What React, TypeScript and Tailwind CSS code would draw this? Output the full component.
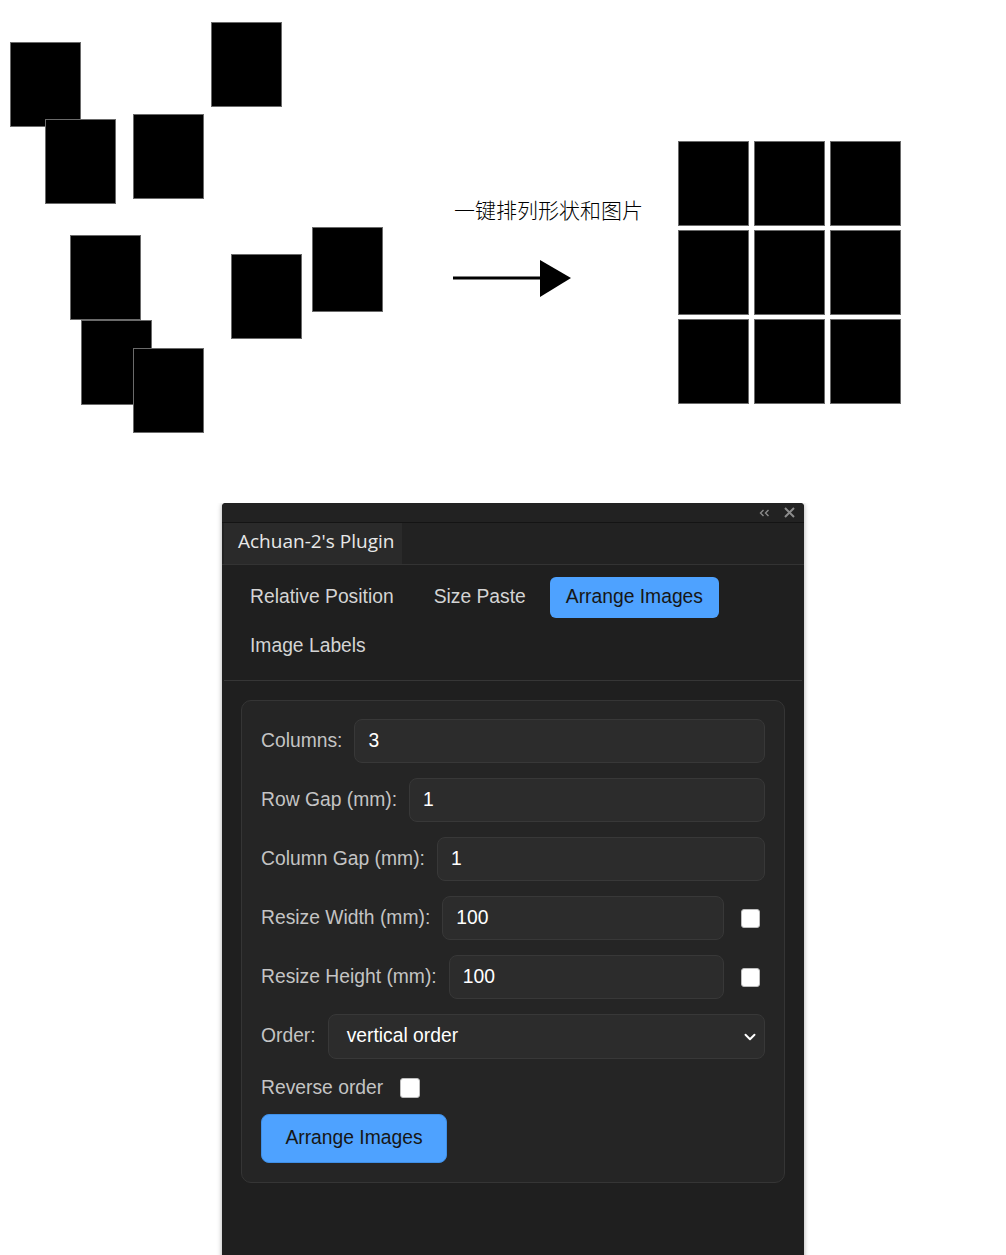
import { ChevronDown } from "lucide-react";

const scattered = [
  { left: 10, top: 42 },
  { left: 45, top: 119 },
  { left: 133, top: 114 },
  { left: 211, top: 22 },
  { left: 70, top: 235 },
  { left: 81, top: 320 },
  { left: 133, top: 348 },
  { left: 231, top: 254 },
  { left: 312, top: 227 },
];

const tabs = ["Relative Position", "Size Paste", "Arrange Images", "Image Labels"];

function Diagram() {
  return (
    <div className="relative h-[503px] w-full bg-white">
      {/* loose shapes, placed freely */}
      {scattered.map((s, i) => (
        <div
          key={i}
          className="absolute h-[85px] w-[71px] border border-[#6a6a6a] bg-black"
          style={{ left: s.left, top: s.top }}
        />
      ))}

      {/* caption + arrow */}
      <div className="absolute left-[454px] top-[194px] text-[21px] leading-[30px] text-black [font-family:'Noto_Sans_CJK_SC','Noto_Sans',sans-serif] font-light">
        一键排列形状和图片
      </div>
      <svg className="absolute left-[453px] top-[258px]" width="120" height="40" viewBox="0 0 120 40">
        <line x1="0" y1="20" x2="90" y2="20" stroke="#000" strokeWidth="3" />
        <polygon points="87,2 118,20 87,39" fill="#000" />
      </svg>

      {/* arranged result */}
      <div className="absolute left-[678px] top-[141px] grid grid-cols-[71px_71px_71px] gap-x-[5px] gap-y-[4px]">
        {Array.from({ length: 9 }).map((_, i) => (
          <div key={i} className="h-[85px] w-[71px] border border-[#6a6a6a] bg-black" />
        ))}
      </div>
    </div>
  );
}

function Field({
  label,
  value,
  check,
}: {
  label: string;
  value: string;
  check?: boolean;
}) {
  return (
    <div className="flex items-center">
      <span className="whitespace-nowrap text-[#c4c4c4]">{label}</span>
      <div className="ml-[12px] flex h-[44px] flex-1 items-center rounded-[8px] border border-[#383838] bg-[#2c2c2c] pl-[13px] text-white">
        {value}
      </div>
      {check && (
        <div className="ml-[17px] mr-[5px] h-[19px] w-[19px] rounded-[3px] border border-[#bdbdbd] bg-white" />
      )}
    </div>
  );
}

function Panel() {
  return (
    <div className="ml-[222px] w-[582px] overflow-hidden rounded-t-[4px] bg-[#1f1f1f] pb-[80px] shadow-[0_0_5px_rgba(0,0,0,0.35)]">
      {/* title bar */}
      <div className="flex h-[20px] items-center justify-end gap-[14px] border-b border-[#141414] bg-[#222222] pr-[9px]">
        <svg width="11" height="8" viewBox="0 0 11 8" fill="none" stroke="#8a8a8a" strokeWidth="1.4">
          <path d="M4.5 1 L1.5 4 L4.5 7" />
          <path d="M9.5 1 L6.5 4 L9.5 7" />
        </svg>
        <svg width="11" height="11" viewBox="0 0 11 11" fill="none" stroke="#8c8c8c" strokeWidth="2">
          <path d="M1 1 L10 10 M10 1 L1 10" />
        </svg>
      </div>

      {/* plugin tab header */}
      <div className="flex h-[42px] border-b border-[#333333] bg-[#222222] pl-[2px]">
        <div className="flex items-center bg-[#2a2a2a] pb-[4px] pl-[14px] pr-[8px] text-[19px] text-[#e8e8e8] [font-family:'Open_Sans',sans-serif]">
          Achuan-2's Plugin
        </div>
      </div>

      <div className="text-[19.3px] [font-family:'Liberation_Sans',Arial,sans-serif]">
        {/* tabs */}
        <div className="mx-[2px] flex flex-wrap gap-[8px] border-b border-[#363636] pb-[13px] pl-[10px] pt-[12px]">
          {tabs.map((t) => (
            <div
              key={t}
              className={`flex h-[41px] items-center rounded-[6px] px-[16px] ${
                t === "Arrange Images" ? "bg-[#4ea2ff] text-[#161616]" : "text-[#d4d4d4]"
              }`}
            >
              {t}
            </div>
          ))}
        </div>

        {/* settings card */}
        <div className="mx-[19px] mt-[19px] flex flex-col rounded-[10px] border border-[#353535] bg-[#252525] px-[19px] pb-[19px] pt-[18px]">
          <div className="flex flex-col gap-[15px]">
            <Field label="Columns:" value="3" />
            <Field label="Row Gap (mm):" value="1" />
            <Field label="Column Gap (mm):" value="1" />
            <Field label="Resize Width (mm):" value="100" check />
            <Field label="Resize Height (mm):" value="100" check />
            <div className="flex items-center">
              <span className="text-[#c4c4c4]">Order:</span>
              <div className="ml-[12px] flex h-[45px] flex-1 items-center justify-between rounded-[8px] border border-[#383838] bg-[#2c2c2c] pl-[18px] pr-[5px] text-white">
                <span>vertical order</span>
                <ChevronDown size={18} strokeWidth={2.6} className="text-white" />
              </div>
            </div>
          </div>

          <div className="mt-[15px] flex items-center">
            <span className="text-[#c4c4c4]">Reverse order</span>
            <div className="ml-[17px] h-[20px] w-[20px] rounded-[3px] border border-[#bdbdbd] bg-white" />
          </div>

          <button className="mt-[11px] flex h-[49px] w-[186px] items-center justify-center rounded-[8px] border border-[#3f8fe6] bg-[#4ea2ff] text-[#161616]">
            Arrange Images
          </button>
        </div>
      </div>
    </div>
  );
}

export default function App() {
  return (
    <div className="min-h-[1255px] overflow-hidden bg-white">
      <Diagram />
      <Panel />
    </div>
  );
}
